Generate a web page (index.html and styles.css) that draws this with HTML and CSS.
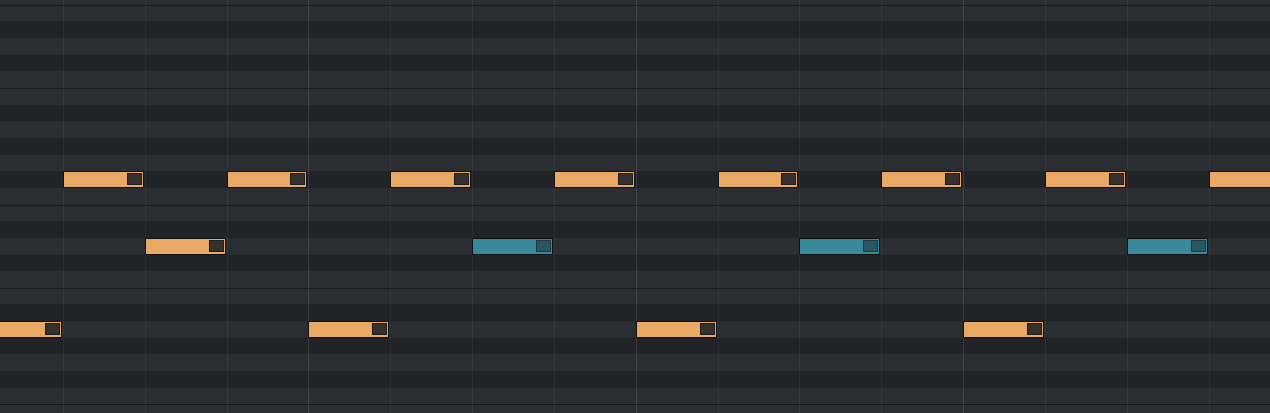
FILE: index.html
```html
<!DOCTYPE html>
<html lang="en">
<head>
    <meta charset="UTF-8">
    <meta name="viewport" content="width=device-width, initial-scale=1.0">
    <title>Piano Roll</title>
    <link rel="stylesheet" href="styles.css">
</head>
<body>
    <div class="roll">
        <div class="keys">
            <div class="key white"></div>
            <div class="key white edge"></div>
            <div class="key black"></div>
            <div class="key white"></div>
            <div class="key black"></div>
            <div class="key white"></div>
            <div class="key white edge"></div>
            <div class="key black"></div>
            <div class="key white"></div>
            <div class="key black"></div>
            <div class="key white"></div>
            <div class="key black"></div>
            <div class="key white"></div>
            <div class="key white edge"></div>
            <div class="key black"></div>
            <div class="key white"></div>
            <div class="key black"></div>
            <div class="key white"></div>
            <div class="key white edge"></div>
            <div class="key black"></div>
            <div class="key white"></div>
            <div class="key black"></div>
            <div class="key white"></div>
            <div class="key black"></div>
            <div class="key white"></div>
            <div class="key white edge"></div>
        </div>
        <div class="beats">
            <div class="beat bar"></div><div class="beat"></div><div class="beat"></div><div class="beat"></div>
            <div class="beat bar"></div><div class="beat"></div><div class="beat"></div><div class="beat"></div>
            <div class="beat bar"></div><div class="beat"></div><div class="beat"></div><div class="beat"></div>
            <div class="beat bar"></div><div class="beat"></div><div class="beat"></div><div class="beat"></div>
        </div>
        <div class="notes">
            <div class="note" style="grid-area: 21 / 1"></div>
            <div class="note" style="grid-area: 12 / 2"></div>
            <div class="note" style="grid-area: 16 / 3"></div>
            <div class="note" style="grid-area: 12 / 4"></div>

            <div class="note" style="grid-area: 21 / 5"></div>
            <div class="note" style="grid-area: 12 / 6"></div>
            <div class="note teal" style="grid-area: 16 / 7"></div>
            <div class="note" style="grid-area: 12 / 8"></div>

            <div class="note" style="grid-area: 21 / 9"></div>
            <div class="note" style="grid-area: 12 / 10"></div>
            <div class="note teal" style="grid-area: 16 / 11"></div>
            <div class="note" style="grid-area: 12 / 12"></div>

            <div class="note" style="grid-area: 21 / 13"></div>
            <div class="note" style="grid-area: 12 / 14"></div>
            <div class="note teal" style="grid-area: 16 / 15"></div>
            <div class="note" style="grid-area: 12 / 16"></div>
        </div>
    </div>
</body>
</html>
```

FILE: styles.css
```css
body {
    margin: 0;
    background: #232427;
    overflow: hidden;
    height: 100vh;
}
.roll {
    position: relative;
    margin: -12px 0 0 -19px;
    width: 1309.7px;
}
.keys {
    display: flex;
    flex-direction: column;
}
.key {
    height: 16.667px;
}
.white { background: #2a2d32; }
.black { background: #222326; }
.edge { box-shadow: inset 0 1px 0 #18191c; }

.beats {
    position: absolute;
    inset: 0;
    display: grid;
    grid-template-columns: repeat(16, 81.857px);
}
.beat { border-left: 1px solid rgba(255, 255, 255, 0.045); }
.beat.bar { border-left-color: rgba(255, 255, 255, 0.11); }

.notes {
    position: absolute;
    inset: 0;
    display: grid;
    grid-template-columns: repeat(16, 81.857px);
    grid-template-rows: repeat(26, 16.667px);
}
.note {
    box-sizing: border-box;
    width: calc(100% - 1px);
    height: calc(100% + 0.4px);
    background: #e9a863;
    border: 1px solid #111111;
    display: flex;
    justify-content: flex-end;
    align-items: center;
    padding: 0 1px 1px 0;
}
.note::after {
    content: "";
    box-sizing: border-box;
    width: 15px;
    height: 12px;
    background: #35322e;
    border: 1px solid #1f1d1a;
}
.teal { background: #3a889c; }
.teal::after { background: #2a5664; border-color: #1c3a43; }
```
